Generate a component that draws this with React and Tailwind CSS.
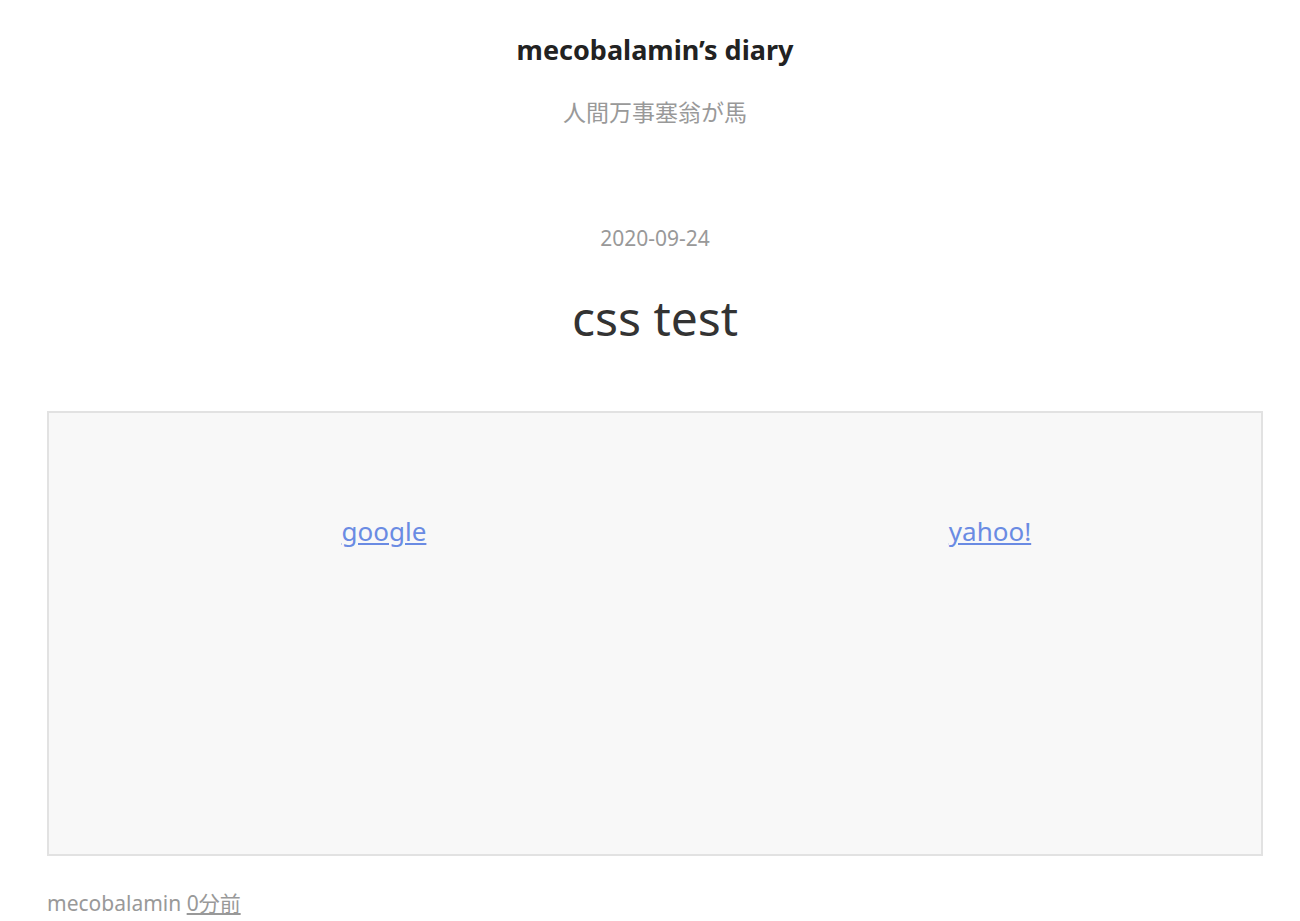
export default function App() {
  return (
    <div className="min-h-screen bg-white pl-[47px] pr-[37px] font-['Noto_Sans','Noto_Sans_CJK_JP',sans-serif] text-[#333]">
      <header className="pt-[30px] text-center">
        <h1 className="text-[27px] font-bold leading-[40px] text-[#222]">mecobalamin’s diary</h1>
        <p className="mt-[27px] text-[23px] leading-[30px] text-[#999]">人間万事塞翁が馬</p>
      </header>

      <main className="pt-[96px]">
        <div className="text-center text-[21px] leading-[30px] text-[#999]">2020-09-24</div>
        <h2 className="mt-[35px] text-center text-[48px] leading-[60px] text-[#333]">css test</h2>

        <div className="mt-[63px] grid h-[445px] grid-cols-2 border-2 border-[#e2e2e2] bg-[#f8f8f8]">
          <div className="pl-[64px] pt-[100px] text-center">
            <a href="#" className="text-[26px] leading-[36px] text-[#6a8be3] underline">google</a>
          </div>
          <div className="pl-[64px] pt-[100px] text-center">
            <a href="#" className="text-[26px] leading-[36px] text-[#6a8be3] underline">yahoo!</a>
          </div>
        </div>

        <footer className="pt-[32px] text-[21px] leading-[30px] text-[#999]">
          mecobalamin <a href="#" className="underline">0分前</a>
        </footer>
      </main>
    </div>
  );
}
